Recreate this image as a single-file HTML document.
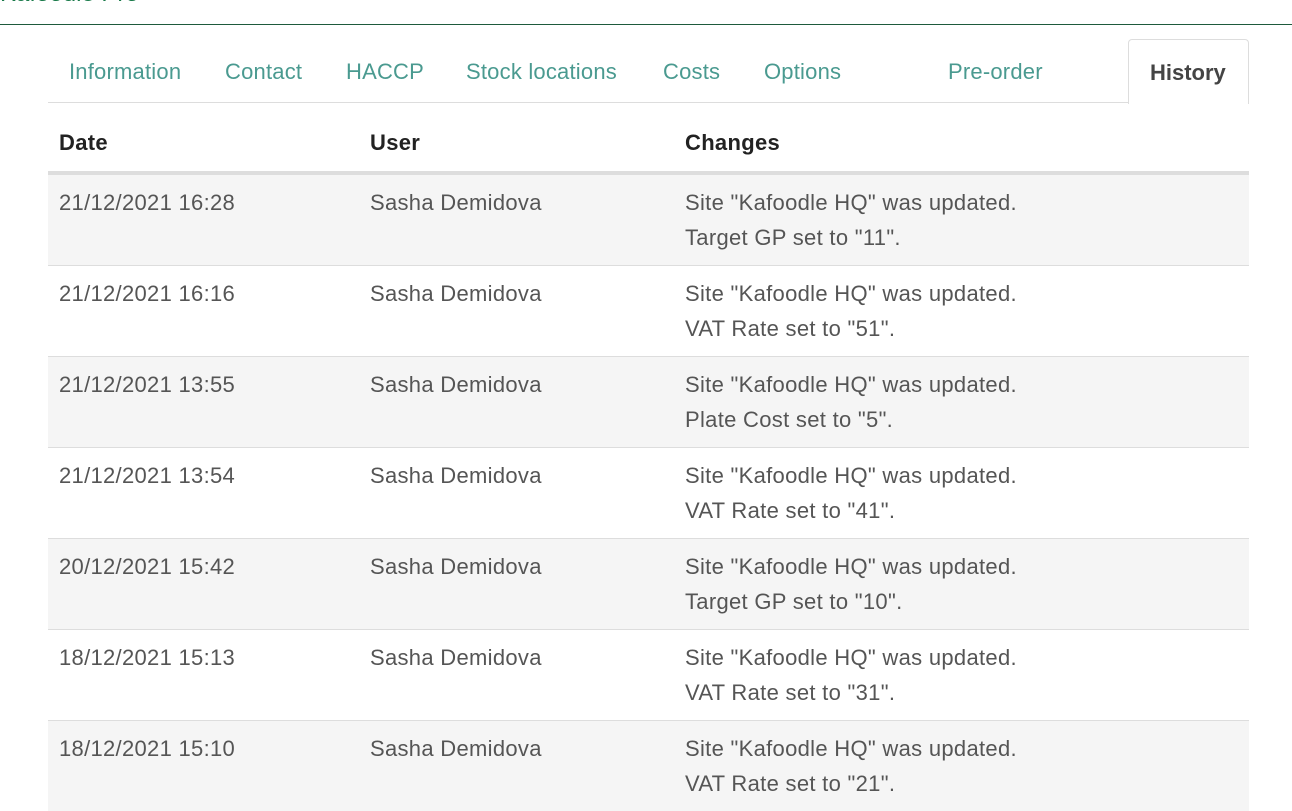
<!DOCTYPE html>
<html><head><style>
body{margin:0;width:1292px;height:750px;overflow:hidden;background:#fff;font-family:"Liberation Sans",sans-serif;color:#555;}
.top{position:absolute;left:0;top:-20px;font-size:24px;color:#1a7a4a;}
.hr{position:absolute;left:0;right:0;top:24px;height:1px;background:#1e5a3c;}
.tabs{position:absolute;left:48px;top:39px;width:1201px;height:63px;border-bottom:1px solid #ddd;}
.tab{position:absolute;top:20px;font-size:22px;letter-spacing:0.2px;color:#4a9a90;white-space:nowrap;}
.active{position:absolute;left:1080px;top:0;width:119px;height:64px;border:1px solid #ddd;border-bottom:none;border-radius:4px 4px 0 0;background:#fff;}
.active span{position:absolute;left:21px;top:20px;font-size:22px;font-weight:bold;color:#444;}
table{position:absolute;left:48px;top:103px;width:1201px;border-collapse:collapse;font-size:22px;letter-spacing:0.3px;}
th{text-align:left;font-weight:bold;color:#222;height:70px;border-bottom:4px solid #ddd;padding:12px 11px 0;box-sizing:border-box;}
td{vertical-align:top;padding:10px 11px 0;height:80px;border-top:1px solid #ddd;line-height:35px;}
tr.g td{background:#f5f5f5;}
</style></head><body>
<div class="top">Kafoodle Pro</div>
<div class="hr"></div>
<div class="tabs">
<span class="tab" style="left:21px">Information</span>
<span class="tab" style="left:177px">Contact</span>
<span class="tab" style="left:298px">HACCP</span>
<span class="tab" style="left:418px">Stock locations</span>
<span class="tab" style="left:615px">Costs</span>
<span class="tab" style="left:716px">Options</span>
<span class="tab" style="left:900px">Pre-order</span>
<div class="active"><span>History</span></div>
</div>
<table>
<tr><th style="width:311px">Date</th><th style="width:315px">User</th><th>Changes</th></tr>
<tr class="g"><td>21/12/2021 16:28</td><td>Sasha Demidova</td><td>Site "Kafoodle HQ" was updated.<br>Target GP set to "11".</td></tr>
<tr><td>21/12/2021 16:16</td><td>Sasha Demidova</td><td>Site "Kafoodle HQ" was updated.<br>VAT Rate set to "51".</td></tr>
<tr class="g"><td>21/12/2021 13:55</td><td>Sasha Demidova</td><td>Site "Kafoodle HQ" was updated.<br>Plate Cost set to "5".</td></tr>
<tr><td>21/12/2021 13:54</td><td>Sasha Demidova</td><td>Site "Kafoodle HQ" was updated.<br>VAT Rate set to "41".</td></tr>
<tr class="g"><td>20/12/2021 15:42</td><td>Sasha Demidova</td><td>Site "Kafoodle HQ" was updated.<br>Target GP set to "10".</td></tr>
<tr><td>18/12/2021 15:13</td><td>Sasha Demidova</td><td>Site "Kafoodle HQ" was updated.<br>VAT Rate set to "31".</td></tr>
<tr class="g"><td>18/12/2021 15:10</td><td>Sasha Demidova</td><td>Site "Kafoodle HQ" was updated.<br>VAT Rate set to "21".</td></tr>
</table>
</body></html>
